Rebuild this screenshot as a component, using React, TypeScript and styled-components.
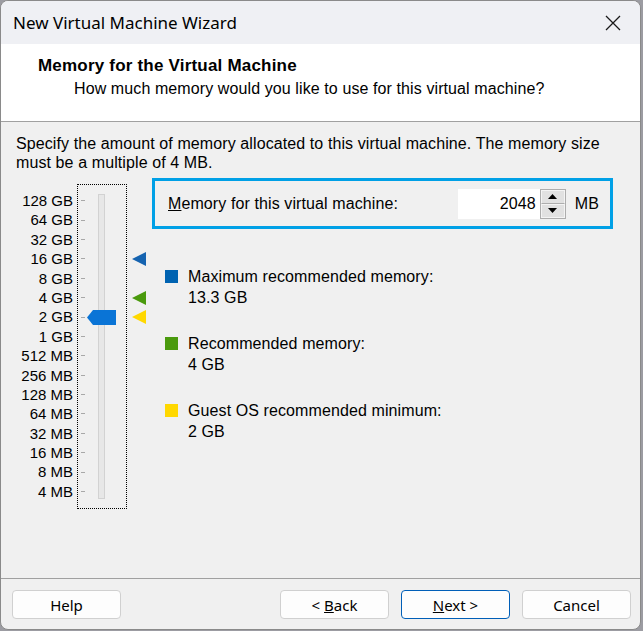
import React from "react";
import styled, { createGlobalStyle } from "styled-components";

const GlobalStyle = createGlobalStyle`
  html, body {
    margin: 0;
    padding: 0;
    background: #9c9ca2;
  }
  * {
    box-sizing: border-box;
  }
`;

const labels = [
  "128 GB", "64 GB", "32 GB", "16 GB", "8 GB", "4 GB", "2 GB", "1 GB",
  "512 MB", "256 MB", "128 MB", "64 MB", "32 MB", "16 MB", "8 MB", "4 MB",
];

const ROW = 19.4;
const selected = 6;

const markers: Record<number, string> = {
  3: "#1563b0",
  5: "#4a9a0d",
  6: "#ffd800",
};

const legend = [
  { color: "#0063b1", title: "Maximum recommended memory:", value: "13.3 GB" },
  { color: "#4a9a0d", title: "Recommended memory:", value: "4 GB" },
  { color: "#ffd800", title: "Guest OS recommended minimum:", value: "2 GB" },
];

const App: React.FC = () => {
  return (
    <>
      <GlobalStyle />
      <Window>
        <TitleBar>
          <Title>New Virtual Machine Wizard</Title>
          <Close>
            <svg width="18" height="18" viewBox="0 0 18 18">
              <path d="M2 2 L16 16 M16 2 L2 16" stroke="#1a1a1a" strokeWidth="1.3" />
            </svg>
          </Close>
        </TitleBar>

        <Header>
          <Heading>Memory for the Virtual Machine</Heading>
          <SubHeading>How much memory would you like to use for this virtual machine?</SubHeading>
        </Header>

        <Body>
          <Description>
            Specify the amount of memory allocated to this virtual machine. The memory size
            <br />
            must be a multiple of 4 MB.
          </Description>

          <Content>
            <Scale>
              {labels.map((l) => (
                <ScaleLabel key={l}>{l}</ScaleLabel>
              ))}
            </Scale>

            <SliderBox>
              <Ticks>
                {labels.map((l) => (
                  <TickRow key={l}>
                    <Tick />
                  </TickRow>
                ))}
              </Ticks>
              <Track>
                <Thumb style={{ top: -4 + selected * ROW + ROW / 2 - 7.5 }}>
                  <svg width="29" height="15" viewBox="0 0 29 15">
                    <path d="M0 7.5 L6 0 H29 V15 H6 Z" fill="#0a74d6" />
                  </svg>
                </Thumb>
              </Track>
            </SliderBox>

            <Markers>
              {labels.map((l, i) => (
                <MarkerRow key={l}>
                  {markers[i] && (
                    <svg width="14" height="14" viewBox="0 0 14 14">
                      <path d="M0 7 L14 0 V14 Z" fill={markers[i]} />
                    </svg>
                  )}
                </MarkerRow>
              ))}
            </Markers>

            <Settings>
              <MemoryBox>
                <FieldLabel>
                  <u>M</u>emory for this virtual machine:
                </FieldLabel>
                <Spin>
                  <SpinInput>2048</SpinInput>
                  <SpinButtons>
                    <SpinButton>
                      <svg width="9" height="5" viewBox="0 0 9 5">
                        <path d="M0 5 L4.5 0 L9 5 Z" fill="#000" />
                      </svg>
                    </SpinButton>
                    <SpinButton>
                      <svg width="9" height="5" viewBox="0 0 9 5">
                        <path d="M0 0 L4.5 5 L9 0 Z" fill="#000" />
                      </svg>
                    </SpinButton>
                  </SpinButtons>
                </Spin>
                <Unit>MB</Unit>
              </MemoryBox>

              <Legend>
                {legend.map((item) => (
                  <LegendItem key={item.title}>
                    <Swatch color={item.color} />
                    <LegendText>
                      <div>{item.title}</div>
                      <div>{item.value}</div>
                    </LegendText>
                  </LegendItem>
                ))}
              </Legend>
            </Settings>
          </Content>
        </Body>

        <Footer>
          <Button>Help</Button>
          <Spacer />
          <Button>
            &lt;&nbsp;<u>B</u>ack
          </Button>
          <Button primary>
            <u>N</u>ext&nbsp;&gt;
          </Button>
          <Button>Cancel</Button>
        </Footer>
      </Window>
    </>
  );
};

export default App;

const Window = styled.div`
  width: 641px;
  height: 630px;
  border: 1px solid #8a8a8a;
  border-radius: 8px;
  overflow: hidden;
  background: #f0f0f0;
  display: flex;
  flex-direction: column;
  font-family: "Liberation Sans", Arial, sans-serif;
  font-size: 16px;
  letter-spacing: 0.1px;
  color: #000;
`;

const TitleBar = styled.div`
  height: 43px;
  flex-shrink: 0;
  background: #eff0f4;
  display: flex;
  align-items: center;
  padding-left: 12px;
`;

const Title = styled.div`
  font-family: "Noto Sans", "Open Sans", sans-serif;
  font-size: 17px;
  letter-spacing: 0;
  color: #000;
  flex: 1;
`;

const Close = styled.div`
  width: 46px;
  height: 43px;
  display: flex;
  align-items: center;
  justify-content: center;
  margin-right: 4px;
`;

const Header = styled.div`
  height: 78px;
  flex-shrink: 0;
  background: #fff;
  border-bottom: 1px solid #a0a0a0;
  padding: 12px 0 0 37px;
`;

const Heading = styled.div`
  font-weight: bold;
  font-size: 17px;
  letter-spacing: 0.2px;
  line-height: 20px;
`;

const SubHeading = styled.div`
  padding-left: 36px;
  line-height: 22px;
  margin-top: 2px;
`;

const Body = styled.div`
  flex: 1;
  padding: 12px 15px 0 15px;
`;

const Description = styled.div`
  line-height: 19px;
`;

const Content = styled.div`
  display: flex;
  align-items: flex-start;
  margin-top: 11px;
`;

const Scale = styled.div`
  width: 57px;
  display: flex;
  flex-direction: column;
  align-items: flex-end;
  padding-top: 8px;
`;

const ScaleLabel = styled.div`
  height: ${ROW}px;
  line-height: ${ROW}px;
  font-size: 15px;
  letter-spacing: 0;
`;

const SliderBox = styled.div`
  width: 50px;
  height: 325px;
  margin: 1px 0 0 4px;
  border: 1px dotted #000;
  display: flex;
  padding: 6px 0 0 3px;
`;

const Ticks = styled.div`
  display: flex;
  flex-direction: column;
  width: 17px;
`;

const TickRow = styled.div`
  height: ${ROW}px;
  display: flex;
  align-items: center;
`;

const Tick = styled.div`
  width: 4px;
  height: 1px;
  background: #a8a8a8;
`;

const Track = styled.div`
  position: relative;
  width: 7px;
  height: 305px;
  margin-top: 3px;
  background: #e7e7e7;
  border: 1px solid #d2d2d2;
`;

const Thumb = styled.div`
  position: absolute;
  left: -12px;
  display: flex;
`;

const Markers = styled.div`
  display: flex;
  flex-direction: column;
  margin-left: 5px;
  padding-top: 8px;
  width: 14px;
`;

const MarkerRow = styled.div`
  height: ${ROW}px;
  display: flex;
  align-items: center;
`;

const Settings = styled.div`
  margin-left: 6px;
  display: flex;
  flex-direction: column;
`;

const MemoryBox = styled.div`
  width: 461px;
  height: 51px;
  margin-top: -5px;
  border: 3px solid #00a0e6;
  display: flex;
  align-items: center;
  padding-left: 13px;
`;

const FieldLabel = styled.div`
  flex: 1;
`;

const Spin = styled.div`
  display: flex;
  height: 30px;
`;

const SpinInput = styled.div`
  width: 82px;
  background: #fff;
  text-align: right;
  padding-right: 4px;
  line-height: 30px;
`;

const SpinButtons = styled.div`
  width: 26px;
  display: flex;
  flex-direction: column;
  border: 1px solid #adadad;
  background: #e1e1e1;
`;

const SpinButton = styled.div`
  flex: 1;
  display: flex;
  align-items: center;
  justify-content: center;
  border: 1px solid #f4f4f4;
  &:first-child {
    border-bottom: 1px solid #adadad;
  }
`;

const Unit = styled.div`
  margin: 0 11px 0 9px;
`;

const Legend = styled.div`
  display: flex;
  flex-direction: column;
  gap: 25px;
  margin-top: 37px;
  padding-left: 13px;
`;

const LegendItem = styled.div`
  display: flex;
  align-items: flex-start;
`;

const Swatch = styled.div<{ color: string }>`
  width: 13px;
  height: 13px;
  margin-top: 4px;
  margin-right: 10px;
  background: ${({ color }) => color};
`;

const LegendText = styled.div`
  line-height: 21px;
`;

const Footer = styled.div`
  height: 51px;
  flex-shrink: 0;
  border-top: 1px solid #a0a0a0;
  display: flex;
  align-items: flex-start;
  gap: 12px;
  padding: 11px 9px 0 11px;
`;

const Spacer = styled.div`
  flex: 1;
`;

const Button = styled.div<{ primary?: boolean }>`
  width: 109px;
  height: 29px;
  border-radius: 4px;
  background: #fdfdfd;
  border: 1px solid ${({ primary }) => (primary ? "#005fb8" : "#d0d0d0")};
  display: flex;
  align-items: center;
  justify-content: center;
  font-family: "Noto Sans", "Open Sans", sans-serif;
  font-size: 15px;
  letter-spacing: 0;
`;
